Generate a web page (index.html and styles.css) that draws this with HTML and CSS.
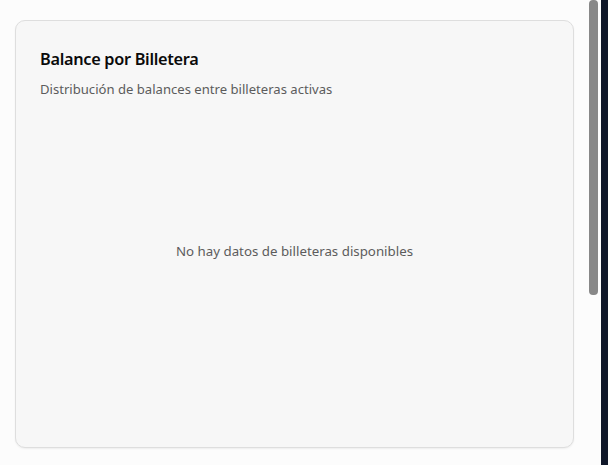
FILE: index.html
```html
<!DOCTYPE html>
<html lang="es">
<head>
<meta charset="utf-8">
<title>Balance por Billetera</title>
<link rel="stylesheet" href="styles.css">
</head>
<body>
<div class="app">
  <main class="main">
    <div class="content">
      <section class="card">
        <header class="card-header">
          <h2 class="card-title">Balance por Billetera</h2>
          <p class="card-desc">Distribución de balances entre billeteras activas</p>
        </header>
        <div class="chart-area">
          <p class="empty">No hay datos de billeteras disponibles</p>
        </div>
      </section>
    </div>
  </main>
  <div class="scrollbar"><div class="thumb"></div></div>
  <aside class="side"></aside>
</div>
</body>
</html>
```

FILE: styles.css
```css
* { box-sizing: border-box; }
html, body { margin: 0; padding: 0; height: 100%; }
body {
  font-family: "Noto Sans", "Open Sans", sans-serif;
  background: #fcfcfc;
  color: #0a0a0a;
  overflow: hidden;
}
.app {
  display: flex;
  height: 465px;
}
.main {
  width: 588px;
  flex: none;
  height: 465px;
  overflow: hidden;
  background: #fcfcfc;
}
.scrollbar {
  width: 13px;
  flex: none;
  height: 465px;
  background: #fcfcfc;
  padding-left: 1px;
}
.thumb {
  width: 9px;
  height: 295px;
  background: #888888;
  border-radius: 4px;
}
.side {
  flex: 1;
  background: #0f1729;
}
.content {
  padding: 20px 14px 0 15px;
}
.card {
  background: #f7f7f7;
  border: 1px solid #dedede;
  border-radius: 10px;
  height: 428px;
  box-shadow: 0 1px 2px rgba(0,0,0,0.06);
  padding: 24px 24px;
}
.card-header {
  display: flex;
  flex-direction: column;
  gap: 7px;
}
.card-title {
  margin: 0;
  font-size: 16.3px;
  font-weight: 600;
  line-height: 28px;
  letter-spacing: -0.3px;
  color: #0a0a0a;
}
.card-desc {
  margin: 0;
  font-size: 13.1px;
  line-height: 18px;
  color: #5c5c5c;
}
.chart-area {
  height: 300px;
  display: flex;
  align-items: center;
  justify-content: center;
  margin-top: 3px;
}
.empty {
  margin: 0;
  font-size: 13.3px;
  color: #5c5c5c;
}
```
